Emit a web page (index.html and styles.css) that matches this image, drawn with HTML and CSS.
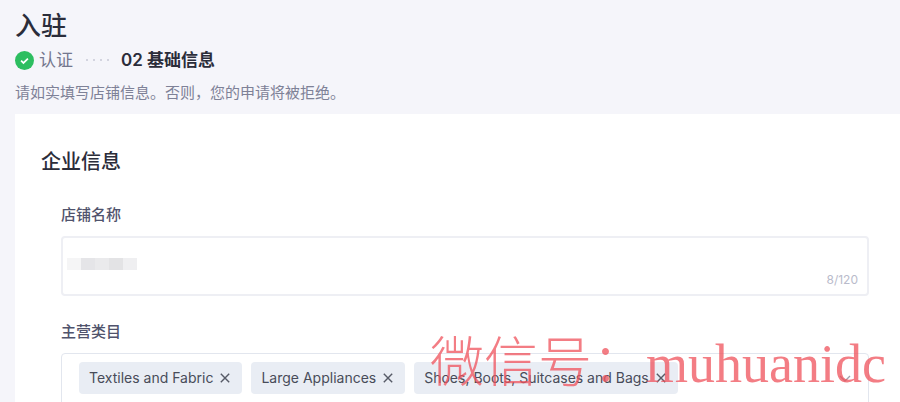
FILE: index.html
```html
<!DOCTYPE html>
<html lang="zh-CN">
<head>
<meta charset="utf-8">
<meta name="viewport" content="width=device-width, initial-scale=1">
<title>入驻</title>
<link rel="stylesheet" href="styles.css">
</head>
<body>
<header class="page-header">
  <h1 class="page-title">入驻</h1>
  <div class="steps">
    <svg class="step-check" viewBox="0 0 20 20" aria-hidden="true"><circle cx="10" cy="10" r="10" fill="#2dbe60"/><path d="M6.4 10.2l2.5 2.4 4.7-4.6" fill="none" stroke="#fff" stroke-width="1.8"/></svg>
    <span class="step-done">认证</span>
    <span class="step-dots"><i></i><i></i><i></i><i></i></span>
    <span class="step-current">02 基础信息</span>
  </div>
  <p class="page-hint">请如实填写店铺信息。否则，您的申请将被拒绝。</p>
</header>
<main class="card">
  <h2 class="section-title">企业信息</h2>
  <form class="form">
    <div class="field">
      <label class="label" for="shop">店铺名称</label>
      <div class="text-box">
        <textarea id="shop" class="text-input"></textarea>
        <span class="mask"><i></i><i></i><i></i><i></i><i></i></span>
        <span class="counter">8/120</span>
      </div>
    </div>
    <div class="field">
      <span class="label" id="category">主营类目</span>
      <div class="tag-box" role="group" aria-labelledby="category">
        <span class="tag">Textiles and Fabric<button type="button" class="remove"><svg viewBox="0 0 10 10"><path d="M.8.8l8.4 8.4M9.2.8L.8 9.2"/></svg></button></span>
        <span class="tag">Large Appliances<button type="button" class="remove"><svg viewBox="0 0 10 10"><path d="M.8.8l8.4 8.4M9.2.8L.8 9.2"/></svg></button></span>
        <span class="tag">Shoes, Boots, Suitcases and Bags<button type="button" class="remove"><svg viewBox="0 0 10 10"><path d="M.8.8l8.4 8.4M9.2.8L.8 9.2"/></svg></button></span>
        <button type="button" class="expand"><svg viewBox="0 0 12 8"><path d="M1 1l5 5 5-5"/></svg></button>
      </div>
    </div>
  </form>
</main>
<div class="watermark">微信号：muhuanidc</div>
</body>
</html>
```
FILE: styles.css
```css
* {
  box-sizing: border-box;
}

body {
  margin: 0;
  height: 100vh;
  overflow: hidden;
  position: relative;
  background: #f5f5fa;
  color: #2b2d3a;
  font-family: Inter, "Noto Sans CJK SC", sans-serif;
  font-size: 15px;
  line-height: 20px;
}

button {
  padding: 0;
  border: 0;
  background: none;
}

svg {
  display: block;
}

.page-header {
  padding: 12px 15px 11px;
}

.page-title {
  margin: 0 0 8px;
  font-size: 26px;
  font-weight: 500;
  line-height: 28px;
}

.steps {
  display: flex;
  align-items: center;
  font-size: 17px;
  line-height: 24px;
}

.step-check {
  width: 19px;
  height: 19px;
  margin-right: 5px;
}

.step-done {
  color: #74778e;
}

.step-dots {
  display: flex;
  gap: 5px;
  margin: 0 12px 0 13px;
}

.step-dots i {
  width: 2px;
  height: 2px;
  background: #d3d4df;
}

.step-current {
  font-weight: 600;
}

.page-hint {
  margin: 11px 0 0;
  color: #7e8197;
}

.card {
  margin-left: 15px;
  padding: 34px 31px 24px 26px;
  background: #fff;
}

.section-title {
  margin: 0 0 29px;
  font-size: 20px;
  font-weight: 500;
  line-height: 28px;
}

.form {
  padding-left: 20px;
}

.field {
  margin-bottom: 26px;
}

.label {
  display: block;
  margin-bottom: 11px;
  color: #50536c;
  font-weight: 500;
}

.text-box,
.tag-box {
  position: relative;
  min-height: 60px;
  border: 2px solid #eeeff4;
  border-radius: 4px;
  background: #fff;
}

.text-input {
  display: block;
  width: 100%;
  height: 56px;
  padding: 16px 64px 16px 8px;
  border: 0;
  outline: 0;
  resize: none;
  background: none;
  font: inherit;
}

.mask {
  position: absolute;
  top: 20px;
  left: 4px;
  display: flex;
}

.mask i {
  width: 14px;
  height: 12px;
  background: #f5f5f6;
}

.mask i:nth-child(2) {
  background: #e5e5e8;
}

.mask i:nth-child(3) {
  background: #eaeaec;
}

.mask i:nth-child(4) {
  background: #e3e3e5;
}

.mask i:nth-child(5) {
  background: #efeff1;
}

.counter {
  position: absolute;
  right: 9px;
  bottom: 4px;
  color: #b9bbcb;
  font-size: 12px;
}

.tag-box {
  display: flex;
  align-items: flex-start;
  gap: 9px;
  padding: 8px 17px;
  border-width: 1px;
  border-color: #e2e6ee;
}

.tag {
  display: flex;
  align-items: center;
  gap: 7px;
  height: 32px;
  padding: 0 12px 0 10px;
  border-radius: 4px;
  background: #e9edf4;
  color: #484c59;
  font-size: 14px;
}

.remove svg {
  width: 10px;
  height: 10px;
}

.remove path,
.expand path {
  fill: none;
  stroke: #565a66;
  stroke-width: 1.4;
}

.expand {
  margin: 13px 0 0 auto;
}

.expand svg {
  width: 12px;
  height: 8px;
}

.expand path {
  stroke: #9da1ad;
}

.watermark {
  position: absolute;
  right: 14px;
  bottom: 8px;
  color: #f0525c;
  font-family: "Liberation Serif", "Noto Sans CJK SC", serif;
  font-size: 54px;
  font-weight: 300;
  line-height: 60px;
  opacity: 0.75;
  pointer-events: none;
}
```
